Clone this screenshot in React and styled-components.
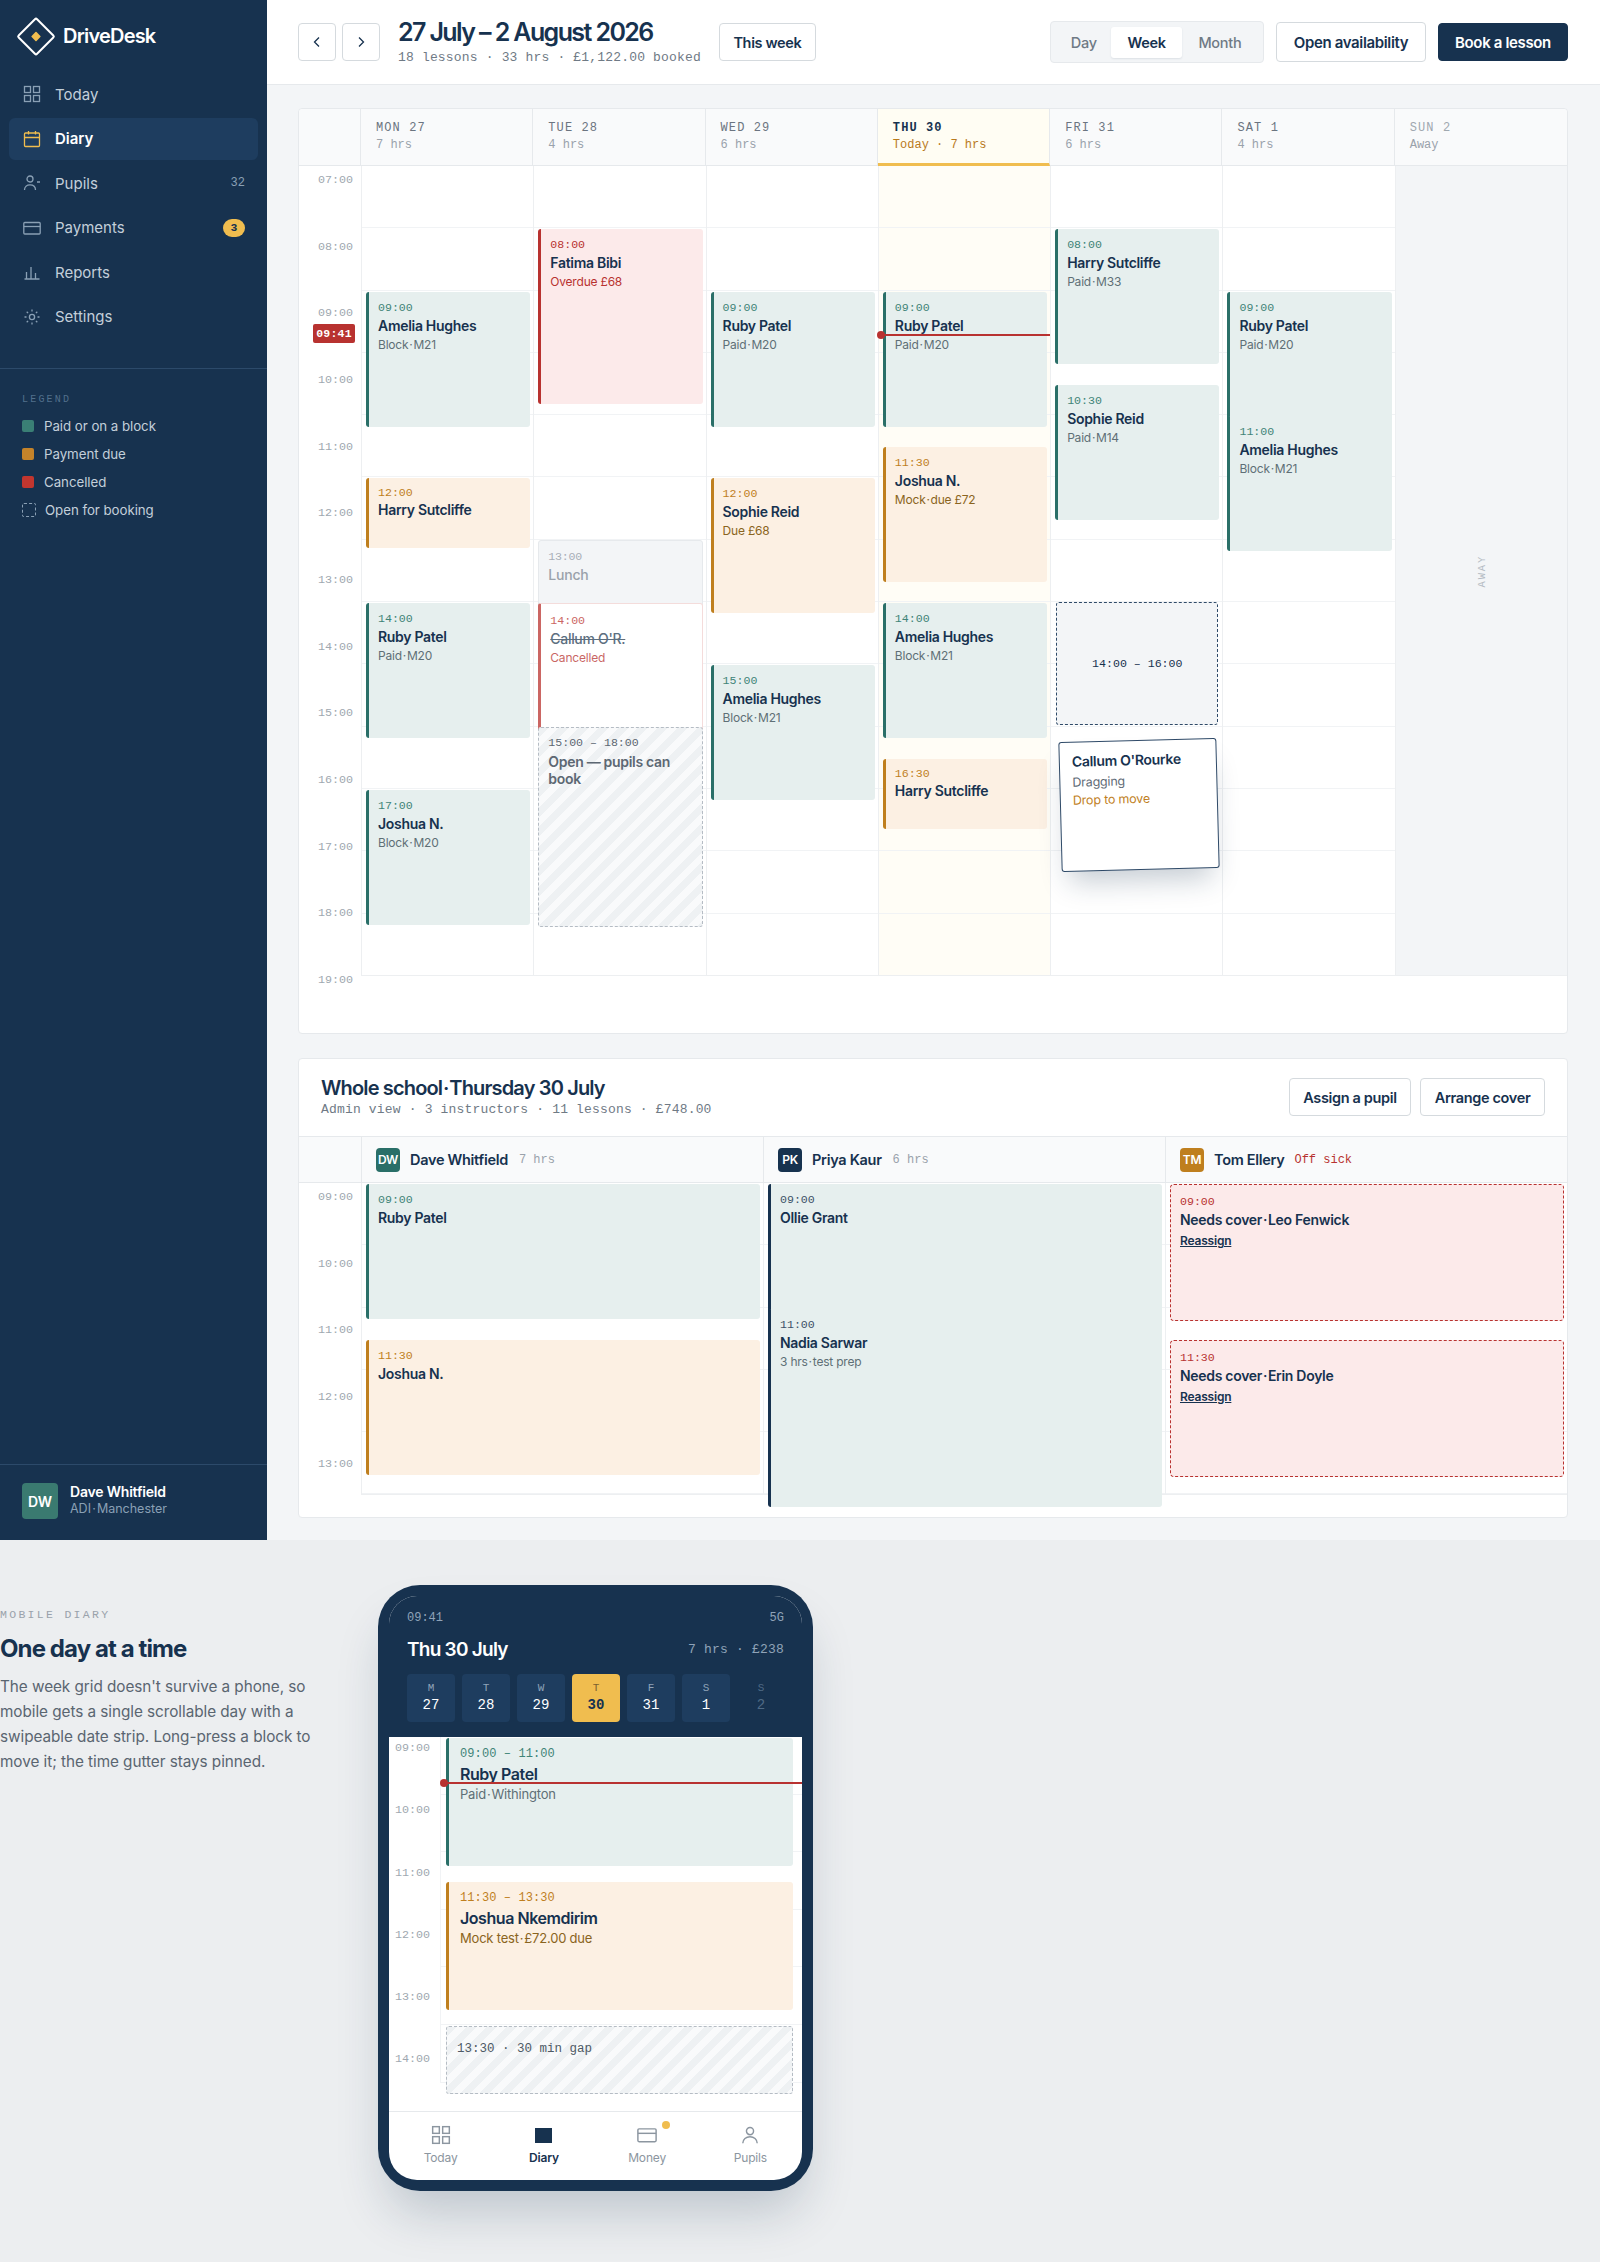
import React from 'react';
import styled, { createGlobalStyle, css } from 'styled-components';

const NAVY = '#17324f';
const LINE = '#e6e9ec';
const GRID = '#f1f3f5';
const MONO = '"Liberation Mono", monospace';
const SANS = 'Inter, "Noto Sans", sans-serif';
const HOUR = 62.3;
const DOT = '\u200A·\u200A';

const Global = createGlobalStyle`
  html, body { margin: 0; padding: 0; background: #eceef0; }
  body { font-family: ${SANS}; color: ${NAVY}; }
  * { box-sizing: border-box; }
`;

const tones = {
  green: { bg: '#e6efee', bar: '#2a6f68', time: '#3f8478', sub: '#5f6f76' },
  amber: { bg: '#fcf0e3', bar: '#bf7f1e', time: '#bf7f1e', sub: '#8a6420' },
  red: { bg: '#fceaea', bar: '#b83230', time: '#b83230', sub: '#b83230' },
  navy: { bg: '#e6efee', bar: NAVY, time: '#3d5268', sub: '#5f6f76' },
};

/* ---------- icons ---------- */
const Svg = ({ size = 18, children }) => (
  <svg width={size} height={size} viewBox="0 0 18 18" fill="none" stroke="currentColor" strokeWidth="1.3">
    {children}
  </svg>
);
const GridIcon = ({ size }) => (
  <Svg size={size}>
    <rect x="1.5" y="1.5" width="6" height="6" />
    <rect x="10.5" y="1.5" width="6" height="6" />
    <rect x="1.5" y="10.5" width="6" height="6" />
    <rect x="10.5" y="10.5" width="6" height="6" />
  </Svg>
);
const CalendarIcon = () => (
  <Svg>
    <rect x="1.5" y="3" width="15" height="13.5" rx="1" />
    <path d="M1.5 7.5h15M5.5 1v3.5M12.5 1v3.5" />
  </Svg>
);
const PupilIcon = () => (
  <Svg>
    <circle cx="7" cy="5" r="3" />
    <path d="M1.5 16c0-3.4 2.4-5.2 5.5-5.2s5.5 1.8 5.5 5.2M14 8h3" />
  </Svg>
);
const CardIcon = ({ size }) => (
  <Svg size={size}>
    <rect x="0.8" y="3.5" width="16.4" height="11.5" rx="1" />
    <path d="M0.8 7.5h16.4" />
  </Svg>
);
const ChartIcon = () => (
  <Svg>
    <path d="M1.5 16h15M3.5 16V9M8 16V4M12.5 16v-6" />
  </Svg>
);
const SunIcon = () => (
  <Svg>
    <circle cx="9" cy="9" r="2.6" />
    <path d="M9 1.5v2M9 14.5v2M1.5 9h2M14.5 9h2M3.7 3.7l1.4 1.4M12.9 12.9l1.4 1.4M3.7 14.3l1.4-1.4M12.9 5.1l1.4-1.4" />
  </Svg>
);
const PersonIcon = () => (
  <Svg size={20}>
    <circle cx="9" cy="5.5" r="3.2" />
    <path d="M2.5 16.5c0-3.6 3-6 6.5-6s6.5 2.4 6.5 6" />
  </Svg>
);
const Chevron = ({ left }) => (
  <svg width="14" height="14" viewBox="0 0 14 14" fill="none" stroke={NAVY} strokeWidth="1.3">
    <path d={left ? 'M9 2.5 4.5 7 9 11.5' : 'M5 2.5 9.5 7 5 11.5'} />
  </svg>
);
const Logo = () => (
  <svg width="40" height="41" viewBox="0 0 40 41" fill="none">
    <rect x="7" y="7.5" width="26" height="26" rx="1.5" transform="rotate(45 20 20.5)" stroke="#fff" strokeWidth="2" />
    <rect x="16.5" y="17" width="7" height="7" rx="0.8" transform="rotate(45 20 20.5)" fill="#f0bd4f" />
  </svg>
);

/* ---------- shell ---------- */
const Page = styled.div`
  width: 1600px;
  min-height: 2262px;
  background: #eceef0;
`;
const Shell = styled.div`
  display: flex;
  height: 1540px;
`;
const Sidebar = styled.aside`
  width: 267px;
  flex: none;
  background: ${NAVY};
  display: flex;
  flex-direction: column;
  color: #c3cfda;
`;
const Brand = styled.div`
  display: flex;
  align-items: center;
  gap: 7px;
  height: 72px;
  padding: 0 0 0 16px;
  color: #fff;
  font-size: 20px;
  font-weight: 600;
  letter-spacing: -0.8px;
`;
const NavList = styled.nav`
  display: flex;
  flex-direction: column;
  margin-top: 1px;
  height: 296px;
  padding: 0 9px;
  border-bottom: 1px solid #2c4a6a;
`;
const NavItem = styled.div`
  display: flex;
  align-items: center;
  height: 42px;
  margin-bottom: 2.5px;
  padding: 0 13px 0 14px;
  border-radius: 6px;
  font-size: 15px;
  gap: 14px;
  color: #c3cfda;
  svg { color: #8aa0b5; flex: none; }
  ${p => p.$active && css`
    background: #1e3d5f;
    color: #fff;
    font-weight: 600;
    svg { color: #f0bd4f; }
  `}
`;
const NavCount = styled.span`
  margin-left: auto;
  font-family: ${MONO};
  font-size: 12px;
  color: #8aa0b5;
`;
const NavBadge = styled.span`
  margin-left: auto;
  width: 22px;
  height: 18px;
  border-radius: 9px;
  background: #f0bd4f;
  color: ${NAVY};
  font-family: ${MONO};
  font-size: 11.5px;
  font-weight: 700;
  display: flex;
  align-items: center;
  justify-content: center;
`;
const Legend = styled.div`
  padding: 24px 22px 0 22px;
  flex: 1;
  display: flex;
  flex-direction: column;
`;
const LegendTitle = styled.div`
  font-family: ${MONO};
  font-size: 10px;
  letter-spacing: 2.2px;
  color: #52708c;
  line-height: 14px;
  margin-bottom: 5px;
`;
const LegendRow = styled.div`
  display: flex;
  align-items: center;
  gap: ${p => (p.$open ? '9px' : '10px')};
  height: 28px;
  font-size: 13.3px;
  letter-spacing: -0.05px;
`;
const Swatch = styled.span`
  width: 12px;
  height: 12px;
  border-radius: 2px;
  background: ${p => p.$color};
`;
const OpenSwatch = styled.span`
  width: 14px;
  height: 14px;
  border-radius: 2px;
  border: 1px dashed #8aa0b5;
`;
const SideFoot = styled.div`
  height: 76px;
  border-top: 1px solid #2c4a6a;
  padding: 18px 22px 0;
  display: flex;
  gap: 12px;
`;
const SideAvatar = styled.div`
  width: 36px;
  height: 36px;
  border-radius: 4px;
  background: #3a7a70;
  color: #fff;
  font-size: 14px;
  font-weight: 600;
  display: flex;
  align-items: center;
  justify-content: center;
`;
const SideName = styled.div`
  font-size: 14px;
  font-weight: 600;
  color: #fff;
  line-height: 17px;
  letter-spacing: -0.2px;
`;
const SideRole = styled.div`
  font-size: 12.5px;
  color: #8aa0b5;
  line-height: 17px;
`;

/* ---------- main ---------- */
const Main = styled.main`
  flex: 1;
  min-width: 0;
  background: #f3f5f7;
  display: flex;
  flex-direction: column;
`;
const Topbar = styled.header`
  height: 85px;
  flex: none;
  background: #fff;
  border-bottom: 1px solid ${LINE};
  display: flex;
  align-items: center;
  padding: 0 32px 0 31px;
  gap: 18px;
`;
const NavButtons = styled.div`
  display: flex;
  gap: 6px;
`;
const IconBtn = styled.button`
  width: 38px;
  height: 38px;
  background: #fff;
  border: 1px solid #d5dade;
  border-radius: 4px;
  display: flex;
  align-items: center;
  justify-content: center;
  padding: 0;
`;
const TitleBlock = styled.div`
  display: flex;
  flex-direction: column;
`;
const Title = styled.h1`
  margin: 0;
  font-size: 25px;
  font-weight: 600;
  letter-spacing: -1.6px;
  line-height: 29px;
  color: ${NAVY};
`;
const MonoSub = styled.div`
  font-family: ${MONO};
  font-size: 13px;
  letter-spacing: 0.17px;
  color: #6f7a85;
  line-height: 16px;
  margin-top: ${p => p.$gap}px;
`;
const Button = styled.button`
  flex: none;
  height: ${p => p.$h || 38}px;
  width: ${p => p.$w}px;
  padding: 0;
  background: ${p => (p.$primary ? NAVY : '#fff')};
  color: ${p => (p.$primary ? '#fff' : NAVY)};
  border: 1px solid ${p => (p.$primary ? NAVY : '#d5dade')};
  border-radius: 4px;
  font-family: ${SANS};
  font-size: ${p => p.$fs || 14.5}px;
  font-weight: 600;
  letter-spacing: -0.35px;
  white-space: nowrap;
`;
const TopRight = styled.div`
  margin-left: auto;
  display: flex;
  align-items: center;
  gap: 12px;
`;
const Segment = styled.div`
  display: flex;
  align-items: center;
  width: 214px;
  height: 42px;
  padding: 0 5px;
  background: #f3f5f7;
  border: 1px solid ${LINE};
  border-radius: 4px;
`;
const SegItem = styled.div`
  flex: ${p => p.$grow};
  height: 31px;
  display: flex;
  align-items: center;
  justify-content: center;
  font-size: 14.5px;
  font-weight: ${p => (p.$active ? 600 : 500)};
  letter-spacing: -0.3px;
  color: ${p => (p.$active ? NAVY : '#6f7a85')};
  background: ${p => (p.$active ? '#fff' : 'transparent')};
  border-radius: 3px;
  ${p => p.$active && 'box-shadow: 0 1px 2px rgba(23,50,79,.1);'}
`;
const Content = styled.div`
  flex: 1;
  display: flex;
  flex-direction: column;
  gap: 24px;
  padding: 23px 32px 22px 31px;
`;
const Card = styled.section`
  background: #fff;
  border: 1px solid ${LINE};
  border-radius: 4px;
  height: ${p => p.$h}px;
  flex: none;
`;
const WeekHead = styled.div`
  display: grid;
  grid-template-columns: 62px repeat(7, 1fr);
  height: 57px;
  background: #f9fafb;
  border-radius: 4px 4px 0 0;
`;
const HeadCell = styled.div`
  padding: 11px 15px 0;
  border-right: 1px solid ${LINE};
  border-bottom: ${p => (p.$today ? `3px solid #f0bd4f` : `1px solid ${LINE}`)};
  background: ${p => (p.$today ? '#fffdf3' : 'transparent')};
  &:last-child { border-right: 0; }
`;
const HeadDay = styled.div`
  font-family: ${MONO};
  font-size: 12px;
  letter-spacing: 1.1px;
  line-height: 17px;
  color: ${p => (p.$today ? NAVY : p.$away ? '#a0a8b0' : '#6b7480')};
  font-weight: ${p => (p.$today ? 700 : 400)};
`;
const HeadSub = styled.div`
  font-family: ${MONO};
  font-size: 12px;
  line-height: 17px;
  color: ${p => (p.$today ? '#b97a1c' : '#9aa2ab')};
`;
const TimeGrid = styled.div`
  display: grid;
  grid-template-columns: 62px repeat(${p => p.$cols}, 1fr);
  align-items: start;
`;
const Gutter = styled.div`
  position: relative;
`;
const GutterLabel = styled.div`
  height: 66.67px;
  padding: 7px 8px 0 0;
  text-align: right;
  font-family: ${MONO};
  font-size: 11.7px;
  line-height: 15px;
  color: #a0a8b0;
`;
const NowBadge = styled.div`
  position: absolute;
  left: 14px;
  top: 158px;
  width: 42px;
  height: 19px;
  border-radius: 2px;
  background: #b83230;
  color: #fff;
  font-family: ${MONO};
  font-size: 11.5px;
  font-weight: 700;
  letter-spacing: 0.2px;
  display: flex;
  align-items: center;
  justify-content: center;
`;
const Day = styled.div`
  position: relative;
  display: grid;
  grid-template-rows: repeat(${p => p.$hours * 2}, ${HOUR / 2}px);
  grid-template-columns: minmax(0, 1fr);
  padding: 0 3px 0 4px;
  height: ${p => p.$hours * HOUR}px;
  border-left: 1px solid #edeff1;
  border-bottom: 1px solid #edeff1;
  background-color: ${p => (p.$today ? '#fffdf6' : p.$away ? '#f3f5f7' : 'transparent')};
  background-image: ${p => (p.$away ? 'none' : `repeating-linear-gradient(180deg, transparent 0, transparent ${HOUR - 1}px, ${GRID} ${HOUR - 1}px, ${GRID} ${HOUR}px)`)};
`;
const AwayLabel = styled.div`
  grid-row: 1 / -1;
  align-self: center;
  justify-self: center;
  writing-mode: vertical-rl;
  transform: rotate(180deg);
  font-family: ${MONO};
  font-size: 10.5px;
  letter-spacing: 1.8px;
  color: #b5bcc4;
`;
const Block = styled.div`
  grid-row: ${p => p.$row} / span 1;
  grid-column: 1;
  align-self: start;
  height: ${p => p.$h}px;
  margin-top: 1px;
  position: relative;
  padding: ${p => (p.$compact ? 7 : 8)}px 8px 0 ${p => p.$pad || 9}px;
  background: ${p => tones[p.$tone].bg};
  border-left: 3px solid ${p => tones[p.$tone].bar};
  border-radius: 3px;
`;
const BTime = styled.div`
  font-family: ${MONO};
  font-size: 11.6px;
  line-height: 16px;
  margin-bottom: ${p => (p.$compact ? 0 : 1)}px;
  color: ${p => (p.$color ? p.$color : tones[p.$tone]?.time)};
`;
const BName = styled.div`
  font-size: 14px;
  font-weight: 600;
  line-height: 18px;
  letter-spacing: -0.3px;
  color: ${NAVY};
`;
const BSub = styled.div`
  font-size: 12px;
  line-height: 18px;
  margin-top: 1px;
  letter-spacing: -0.2px;
  color: ${p => tones[p.$tone]?.sub};
  opacity: ${p => p.$faded ? 0.75 : 1};
`;
const LunchBlock = styled.div`
  grid-row: ${p => p.$row} / span 1;
  grid-column: 1;
  align-self: start;
  height: 70px;
  padding: 8px 8px 0 9px;
  background: #f3f5f7;
  border: 1px solid ${LINE};
  border-radius: 3px;
  color: #9aa2ab;
  font-size: 14px;
  font-weight: 500;
  line-height: 18px;
  letter-spacing: -0.2px;
`;
const CancelledBlock = styled.div`
  grid-row: ${p => p.$row} / span 1;
  grid-column: 1;
  align-self: start;
  position: relative;
  z-index: 2;
  height: 135px;
  margin-top: 1px;
  padding: 9px 8px 0 9px;
  background: #fff;
  border: 1px solid #f4dcdb;
  border-left: 3px solid #cb6663;
  border-radius: 3px;
`;
const Struck = styled(BName)`
  text-decoration: line-through;
  color: #5d6f80;
  font-weight: 500;
`;
const hatch = css`
  background: repeating-linear-gradient(135deg, #eef1f3 0, #eef1f3 7px, #f9fafb 7px, #f9fafb 14px);
  border: 1px dashed #b5bcc4;
  border-radius: 3px;
`;
const OpenBlock = styled.div`
  ${hatch}
  grid-row: ${p => p.$row} / span 1;
  grid-column: 1;
  align-self: start;
  position: relative;
  z-index: 3;
  height: 200px;
  padding: 7px 8px 0 9px;
`;
const OpenName = styled.div`
  font-size: 14px;
  font-weight: 600;
  line-height: 17px;
  letter-spacing: -0.3px;
  color: #5d6873;
  margin-top: 2px;
`;
const DropSlot = styled.div`
  grid-row: ${p => p.$row} / span 1;
  grid-column: 1;
  align-self: start;
  height: 123px;
  margin: 0 1px;
  background: #f3f5f7;
  border: 1.5px dashed #2f4a68;
  border-radius: 3px;
  display: flex;
  align-items: center;
  justify-content: center;
  font-family: ${MONO};
  font-size: 11.6px;
  color: ${NAVY};
`;
const DragCard = styled.div`
  position: absolute;
  left: 9px;
  top: 574px;
  width: 158px;
  height: 130px;
  padding: 10px 12px;
  background: #fff;
  border: 1.5px solid #2f4a68;
  border-radius: 3px;
  transform: rotate(-1.5deg);
  box-shadow: 0 18px 28px -8px rgba(23, 50, 79, 0.25);
  z-index: 5;
`;
const DragSub = styled.div`
  font-size: 12.5px;
  line-height: 18px;
  margin-top: ${p => p.$gap}px;
  letter-spacing: -0.2px;
  color: ${p => p.$color};
`;
const NowLine = styled.div`
  position: absolute;
  left: ${p => p.$left}px;
  right: 0;
  top: ${p => p.$top}px;
  height: 2px;
  background: #b83230;
  z-index: 4;
  &::before {
    content: '';
    position: absolute;
    left: -4px;
    top: -3px;
    width: 8px;
    height: 8px;
    border-radius: 50%;
    background: #b83230;
  }
`;

/* ---------- admin card ---------- */
const CardHead = styled.div`
  height: 78px;
  padding: 16px 22px 0 22px;
  border-bottom: 1px solid ${LINE};
  display: flex;
  justify-content: space-between;
`;
const CardTitle = styled.h2`
  margin: 0;
  font-size: 20px;
  font-weight: 600;
  letter-spacing: -0.85px;
  line-height: 26px;
`;
const CardActions = styled.div`
  display: flex;
  gap: 9px;
  margin-top: 3px;
`;
const StaffHead = styled.div`
  display: grid;
  grid-template-columns: 62px repeat(3, 1fr);
  height: 46px;
  background: #f9fafb;
`;
const StaffCell = styled.div`
  display: flex;
  align-items: center;
  gap: 10px;
  padding-left: 14px;
  border-left: 1px solid ${LINE};
  border-bottom: 1px solid ${LINE};
`;
const StaffCorner = styled.div`
  border-bottom: 1px solid ${LINE};
`;
const Avatar = styled.div`
  width: 24px;
  height: 24px;
  border-radius: 4px;
  background: ${p => p.$bg};
  color: #fff;
  font-size: 12px;
  font-weight: 600;
  letter-spacing: -0.3px;
  display: flex;
  align-items: center;
  justify-content: center;
`;
const StaffName = styled.span`
  font-size: 14.5px;
  font-weight: 600;
  letter-spacing: -0.3px;
`;
const StaffHours = styled.span`
  font-family: ${MONO};
  font-size: 12px;
  margin-left: ${p => p.$gap || 0}px;
  color: ${p => p.$color || '#9aa2ab'};
`;
const CoverBlock = styled.div`
  grid-row: ${p => p.$row} / span 1;
  grid-column: 1;
  align-self: start;
  height: 137px;
  margin-top: 1px;
  padding: 9px 8px 0 9px;
  background: #fceaea;
  border: 1.5px dashed #b83230;
  border-radius: 4px;
`;
const Reassign = styled.a`
  display: inline-block;
  font-size: 12px;
  font-weight: 600;
  line-height: 16px;
  letter-spacing: -0.2px;
  color: ${NAVY};
  text-decoration: underline;
  margin-top: 2px;
`;

/* ---------- mobile ---------- */
const MobileSection = styled.section`
  display: flex;
  gap: 58px;
  padding-top: 45px;
  height: 722px;
`;
const MobileText = styled.div`
  width: 320px;
  flex: none;
  padding-top: 23px;
`;
const Eyebrow = styled.div`
  font-family: ${MONO};
  font-size: 11.5px;
  letter-spacing: 2.3px;
  line-height: 14px;
  color: #9aa2ab;
`;
const MobileTitle = styled.h2`
  margin: 12px 0 10px;
  font-size: 24px;
  line-height: 30px;
  font-weight: 700;
  letter-spacing: -0.9px;
`;
const MobileCopy = styled.p`
  margin: 0;
  font-size: 15.3px;
  line-height: 25px;
  letter-spacing: -0.05px;
  color: #5a6570;
`;
const Phone = styled.div`
  width: 435px;
  height: 606px;
  flex: none;
  padding: 11px;
  background: ${NAVY};
  border-radius: 42px;
  box-shadow: 0 30px 50px -10px rgba(23, 50, 79, 0.22);
`;
const Screen = styled.div`
  height: 584px;
  border-radius: 28px;
  background: #fff;
  overflow: hidden;
  display: flex;
  flex-direction: column;
`;
const PhoneHead = styled.div`
  height: 141px;
  flex: none;
  background: ${NAVY};
  padding: 14px 18px 0;
`;
const StatusRow = styled.div`
  display: flex;
  justify-content: space-between;
  font-family: ${MONO};
  font-size: 12px;
  line-height: 16px;
  color: #8fa3b8;
`;
const PhoneTitleRow = styled.div`
  display: flex;
  justify-content: space-between;
  align-items: center;
  margin-top: 10px;
  height: 26px;
`;
const PhoneTitle = styled.div`
  color: #fff;
  font-size: 19px;
  font-weight: 600;
  letter-spacing: -0.75px;
`;
const PhoneMeta = styled.div`
  font-family: ${MONO};
  font-size: 13px;
  letter-spacing: 0.2px;
  color: #8fa3b8;
`;
const Strip = styled.div`
  display: grid;
  grid-template-columns: repeat(7, 48px);
  gap: 7px;
  margin-top: 12px;
`;
const StripCell = styled.div`
  height: 48px;
  border-radius: 4px;
  background: ${p => (p.$active ? '#f0bd4f' : p.$dim ? 'transparent' : '#1e3d5f')};
  color: ${p => (p.$active ? NAVY : p.$dim ? '#4f6a85' : '#fff')};
  font-family: ${MONO};
  font-size: 14px;
  font-weight: ${p => (p.$active ? 700 : 400)};
  line-height: 18px;
  text-align: center;
  padding-top: 6px;
`;
const StripLetter = styled.div`
  font-size: 11px;
  line-height: 16px;
  font-weight: 400;
  color: ${p => (p.$active ? '#7a6230' : p.$dim ? '#4f6a85' : '#8fa3b8')};
`;
const PhoneBody = styled.div`
  position: relative;
  height: 374px;
  flex: none;
  display: grid;
  grid-template-columns: 52px 1fr;
  align-items: start;
`;
const PhoneGutter = styled.div`
  height: 346px;
  border-right: 1px solid #f1f3f5;
  overflow: hidden;
`;
const PhoneLabel = styled(GutterLabel)`
  height: 62.3px;
  padding: 4px 10px 0 0;
`;
const PhoneDay = styled.div`
  display: grid;
  grid-template-rows: repeat(12, 28.8px);
  grid-template-columns: minmax(0, 1fr);
  height: 346px;
  padding: 0 9px 0 5px;
  background-image: repeating-linear-gradient(180deg, transparent 0, transparent 56.6px, ${GRID} 56.6px, ${GRID} 57.6px);
`;
const PhoneTime = styled.div`
  font-family: ${MONO};
  font-size: 12px;
  letter-spacing: 0.1px;
  line-height: 17px;
  color: ${p => tones[p.$tone].time};
`;
const PhoneName = styled.div`
  font-size: 16px;
  font-weight: 600;
  letter-spacing: -0.45px;
  line-height: 20px;
  margin-top: 1px;
`;
const PhoneSub = styled.div`
  font-size: 13px;
  line-height: 20px;
  letter-spacing: -0.2px;
  color: ${p => tones[p.$tone].sub};
`;
const GapBlock = styled.div`
  ${hatch}
  grid-row: ${p => p.$row} / span 1;
  grid-column: 1;
  align-self: start;
  height: 68px;
  margin-top: 1px;
  padding: 14px 10px 0;
  font-family: ${MONO};
  font-size: 12.5px;
  line-height: 17px;
  color: #4e5a66;
`;
const Tabs = styled.div`
  height: 68px;
  flex: none;
  border-top: 1px solid ${LINE};
  display: grid;
  grid-template-columns: repeat(4, 1fr);
`;
const Tab = styled.div`
  display: flex;
  flex-direction: column;
  align-items: center;
  padding-top: 11px;
  color: ${p => (p.$active ? NAVY : '#8c96a0')};
  font-size: 12px;
  font-weight: ${p => (p.$active ? 600 : 400)};
  letter-spacing: -0.15px;
`;
const TabIcon = styled.div`
  position: relative;
  width: 24px;
  height: 24px;
  display: flex;
  align-items: center;
  justify-content: center;
  margin-bottom: 3px;
`;
const TabSquare = styled.div`
  width: 17px;
  height: 15px;
  background: ${NAVY};
`;
const TabDot = styled.span`
  position: absolute;
  right: -11px;
  top: -2px;
  width: 8px;
  height: 8px;
  border-radius: 50%;
  background: #f0bd4f;
`;
const TabLabel = styled.span`
  line-height: 16px;
`;

/* ---------- data ---------- */
const navItems = [
  { label: 'Today', icon: <GridIcon /> },
  { label: 'Diary', icon: <CalendarIcon />, active: true },
  { label: 'Pupils', icon: <PupilIcon />, count: '32' },
  { label: 'Payments', icon: <CardIcon />, badge: '3' },
  { label: 'Reports', icon: <ChartIcon /> },
  { label: 'Settings', icon: <SunIcon /> },
];

const weekHead = [
  ['MON 27', '7 hrs'],
  ['TUE 28', '4 hrs'],
  ['WED 29', '6 hrs'],
  ['THU 30', 'Today · 7 hrs', 'today'],
  ['FRI 31', '6 hrs'],
  ['SAT 1', '4 hrs'],
  ['SUN 2', 'Away', 'away'],
];

const hourLabels = ['07:00', '08:00', '09:00', '10:00', '11:00', '12:00', '13:00', '14:00', '15:00', '16:00', '17:00', '18:00', '19:00'];

const rowOf = time => {
  const [h, m] = time.split(':').map(Number);
  return (h - 7) * 2 + (m ? 2 : 1);
};
const adminRow = time => rowOf(time) - 4;

const Lesson = ({ time, name, sub, tone, h, row }) => {
  const compact = h < 100;
  return (
    <Block $row={row || rowOf(time)} $tone={tone} $h={h} $compact={compact}>
      <BTime $tone={tone} $compact={compact}>{time}</BTime>
      <BName>{name}</BName>
      {sub && <BSub $tone={tone}>{sub}</BSub>}
    </Block>
  );
};

export default function App() {
  return (
    <Page>
      <Global />
      <Shell>
        <Sidebar>
          <Brand>
            <Logo />
            DriveDesk
          </Brand>
          <NavList>
            {navItems.map(item => (
              <NavItem key={item.label} $active={item.active}>
                {item.icon}
                {item.label}
                {item.count && <NavCount>{item.count}</NavCount>}
                {item.badge && <NavBadge>{item.badge}</NavBadge>}
              </NavItem>
            ))}
          </NavList>
          <Legend>
            <LegendTitle>LEGEND</LegendTitle>
            <LegendRow><Swatch $color="#3a7f75" />Paid or on a block</LegendRow>
            <LegendRow><Swatch $color="#c4832a" />Payment due</LegendRow>
            <LegendRow><Swatch $color="#c2362f" />Cancelled</LegendRow>
            <LegendRow $open><OpenSwatch />Open for booking</LegendRow>
          </Legend>
          <SideFoot>
            <SideAvatar>DW</SideAvatar>
            <div>
              <SideName>Dave Whitfield</SideName>
              <SideRole>ADI{DOT}Manchester</SideRole>
            </div>
          </SideFoot>
        </Sidebar>

        <Main>
          <Topbar>
            <NavButtons>
              <IconBtn><Chevron left /></IconBtn>
              <IconBtn><Chevron /></IconBtn>
            </NavButtons>
            <TitleBlock>
              <Title>27 July – 2 August 2026</Title>
              <MonoSub $gap={3}>18 lessons · 33 hrs · £1,122.00 booked</MonoSub>
            </TitleBlock>
            <Button $w={97}>This week</Button>
            <TopRight>
              <Segment>
                <SegItem $grow="56">Day</SegItem>
                <SegItem $grow="71" $active>Week</SegItem>
                <SegItem $grow="77">Month</SegItem>
              </Segment>
              <Button $h={40} $w={150} $fs={15}>Open availability</Button>
              <Button $primary $w={130} $fs={15}>Book a lesson</Button>
            </TopRight>
          </Topbar>

          <Content>
            <Card $h={926}>
              <WeekHead>
                <HeadCell />
                {weekHead.map(([day, sub, kind]) => (
                  <HeadCell key={day} $today={kind === 'today'}>
                    <HeadDay $today={kind === 'today'} $away={kind === 'away'}>{day}</HeadDay>
                    <HeadSub $today={kind === 'today'}>{sub}</HeadSub>
                  </HeadCell>
                ))}
              </WeekHead>
              <TimeGrid $cols={7}>
                <Gutter>
                  {hourLabels.map(t => <GutterLabel key={t}>{t}</GutterLabel>)}
                  <NowBadge>09:41</NowBadge>
                </Gutter>

                <Day $hours={13}>
                  <Lesson time="09:00" name="Amelia Hughes" sub={`Block${DOT}M21`} tone="green" h={135} />
                  <Lesson time="12:00" name="Harry Sutcliffe" tone="amber" h={70} />
                  <Lesson time="14:00" name="Ruby Patel" sub={`Paid${DOT}M20`} tone="green" h={135} />
                  <Lesson time="17:00" name="Joshua N." sub={`Block${DOT}M20`} tone="green" h={135} />
                </Day>

                <Day $hours={13}>
                  <Lesson time="08:00" name="Fatima Bibi" sub="Overdue £68" tone="red" h={175} />
                  <LunchBlock $row={rowOf('13:00')}>
                    <BTime $color="#a8afb7">13:00</BTime>
                    Lunch
                  </LunchBlock>
                  <CancelledBlock $row={rowOf('14:00')}>
                    <BTime $color="#cb6663">14:00</BTime>
                    <Struck>Callum O'R.</Struck>
                    <BSub $tone="red" $faded>Cancelled</BSub>
                  </CancelledBlock>
                  <OpenBlock $row={rowOf('16:00')}>
                    <BTime $color="#5d6873">15:00 – 18:00</BTime>
                    <OpenName>Open — pupils can book</OpenName>
                  </OpenBlock>
                </Day>

                <Day $hours={13}>
                  <Lesson time="09:00" name="Ruby Patel" sub={`Paid${DOT}M20`} tone="green" h={135} />
                  <Lesson time="12:00" name="Sophie Reid" sub="Due £68" tone="amber" h={135} />
                  <Lesson time="15:00" name="Amelia Hughes" sub={`Block${DOT}M21`} tone="green" h={135} />
                </Day>

                <Day $hours={13} $today>
                  <Lesson time="09:00" name="Ruby Patel" sub={`Paid${DOT}M20`} tone="green" h={135} />
                  <Lesson time="11:30" name="Joshua N." sub={`Mock${DOT}due £72`} tone="amber" h={135} />
                  <Lesson time="14:00" name="Amelia Hughes" sub={`Block${DOT}M21`} tone="green" h={135} />
                  <Lesson time="16:30" name="Harry Sutcliffe" tone="amber" h={70} />
                  <NowLine $left={2} $top={168} />
                </Day>

                <Day $hours={13}>
                  <Lesson time="08:00" name="Harry Sutcliffe" sub={`Paid${DOT}M33`} tone="green" h={135} />
                  <Lesson time="10:30" name="Sophie Reid" sub={`Paid${DOT}M14`} tone="green" h={135} />
                  <DropSlot $row={rowOf('14:00')}>14:00 – 16:00</DropSlot>
                  <DragCard>
                    <BName>Callum O'Rourke</BName>
                    <DragSub $gap={3} $color="#5f6b76">Dragging</DragSub>
                    <DragSub $gap={0} $color="#bf7f1e">Drop to move</DragSub>
                  </DragCard>
                </Day>

                <Day $hours={13}>
                  <Lesson time="09:00" name="Ruby Patel" sub={`Paid${DOT}M20`} tone="green" h={135} />
                  <Lesson time="11:00" name="Amelia Hughes" sub={`Block${DOT}M21`} tone="green" h={135} />
                </Day>

                <Day $hours={13} $away>
                  <AwayLabel>AWAY</AwayLabel>
                </Day>
              </TimeGrid>
            </Card>

            <Card $h={460}>
              <CardHead>
                <div>
                  <CardTitle>Whole school{DOT}Thursday 30 July</CardTitle>
                  <MonoSub $gap={1}>Admin view · 3 instructors · 11 lessons · £748.00</MonoSub>
                </div>
                <CardActions>
                  <Button $h={38} $w={122}>Assign a pupil</Button>
                  <Button $h={38} $w={125}>Arrange cover</Button>
                </CardActions>
              </CardHead>
              <StaffHead>
                <StaffCorner />
                <StaffCell>
                  <Avatar $bg="#2a6f68">DW</Avatar>
                  <StaffName>Dave Whitfield</StaffName>
                  <StaffHours $gap={1}>7 hrs</StaffHours>
                </StaffCell>
                <StaffCell>
                  <Avatar $bg={NAVY}>PK</Avatar>
                  <StaffName>Priya Kaur</StaffName>
                  <StaffHours $gap={1}>6 hrs</StaffHours>
                </StaffCell>
                <StaffCell>
                  <Avatar $bg="#bf7f1e">TM</Avatar>
                  <StaffName>Tom Ellery</StaffName>
                  <StaffHours $color="#b83230">Off sick</StaffHours>
                </StaffCell>
              </StaffHead>
              <TimeGrid $cols={3}>
                <Gutter>
                  {['09:00', '10:00', '11:00', '12:00', '13:00'].map(t => <GutterLabel key={t}>{t}</GutterLabel>)}
                </Gutter>
                <Day $hours={5}>
                  <Lesson row={adminRow('09:00')} time="09:00" name="Ruby Patel" tone="green" h={135} />
                  <Lesson row={adminRow('11:30')} time="11:30" name="Joshua N." tone="amber" h={135} />
                </Day>
                <Day $hours={5}>
                  <Lesson row={adminRow('09:00')} time="09:00" name="Ollie Grant" tone="navy" h={135} />
                  <Lesson row={adminRow('11:00')} time="11:00" name="Nadia Sarwar" sub={`3 hrs${DOT}test prep`} tone="navy" h={198} />
                </Day>
                <Day $hours={5}>
                  <CoverBlock $row={adminRow('09:00')}>
                    <BTime $color="#b83230">09:00</BTime>
                    <BName>Needs cover{DOT}Leo Fenwick</BName>
                    <Reassign>Reassign</Reassign>
                  </CoverBlock>
                  <CoverBlock $row={adminRow('11:30')}>
                    <BTime $color="#b83230">11:30</BTime>
                    <BName>Needs cover{DOT}Erin Doyle</BName>
                    <Reassign>Reassign</Reassign>
                  </CoverBlock>
                </Day>
              </TimeGrid>
            </Card>
          </Content>
        </Main>
      </Shell>

      <MobileSection>
        <MobileText>
          <Eyebrow>MOBILE DIARY</Eyebrow>
          <MobileTitle>One day at a time</MobileTitle>
          <MobileCopy>
            The week grid doesn't survive a phone, so mobile gets a single scrollable day with a swipeable date strip. Long-press a block to move it; the time gutter stays pinned.
          </MobileCopy>
        </MobileText>

        <Phone>
          <Screen>
            <PhoneHead>
              <StatusRow><span>09:41</span><span>5G</span></StatusRow>
              <PhoneTitleRow>
                <PhoneTitle>Thu 30 July</PhoneTitle>
                <PhoneMeta>7 hrs · £238</PhoneMeta>
              </PhoneTitleRow>
              <Strip>
                {[['M', '27'], ['T', '28'], ['W', '29'], ['T', '30', 'active'], ['F', '31'], ['S', '1'], ['S', '2', 'dim']].map(([l, n, kind]) => (
                  <StripCell key={n} $active={kind === 'active'} $dim={kind === 'dim'}>
                    <StripLetter $active={kind === 'active'} $dim={kind === 'dim'}>{l}</StripLetter>
                    {n}
                  </StripCell>
                ))}
              </Strip>
            </PhoneHead>
            <PhoneBody>
              <PhoneGutter>
                {['09:00', '10:00', '11:00', '12:00', '13:00', '14:00'].map(t => <PhoneLabel key={t}>{t}</PhoneLabel>)}
              </PhoneGutter>
              <PhoneDay>
                <Block $row={1} $tone="green" $h={128} $pad={11}>
                  <PhoneTime $tone="green">09:00 – 11:00</PhoneTime>
                  <PhoneName>Ruby Patel</PhoneName>
                  <PhoneSub $tone="green">Paid{DOT}Withington</PhoneSub>
                </Block>
                <Block $row={6} $tone="amber" $h={128} $pad={11}>
                  <PhoneTime $tone="amber">11:30 – 13:30</PhoneTime>
                  <PhoneName>Joshua Nkemdirim</PhoneName>
                  <PhoneSub $tone="amber">Mock test{DOT}£72.00 due</PhoneSub>
                </Block>
                <GapBlock $row={11}>13:30 · 30 min gap</GapBlock>
              </PhoneDay>
              <NowLine $left={55} $top={45} />
            </PhoneBody>
            <Tabs>
              <Tab><TabIcon><GridIcon size={20} /></TabIcon><TabLabel>Today</TabLabel></Tab>
              <Tab $active><TabIcon><TabSquare /></TabIcon><TabLabel>Diary</TabLabel></Tab>
              <Tab><TabIcon><CardIcon size={20} /><TabDot /></TabIcon><TabLabel>Money</TabLabel></Tab>
              <Tab><TabIcon><PersonIcon /></TabIcon><TabLabel>Pupils</TabLabel></Tab>
            </Tabs>
          </Screen>
        </Phone>
      </MobileSection>
    </Page>
  );
}
